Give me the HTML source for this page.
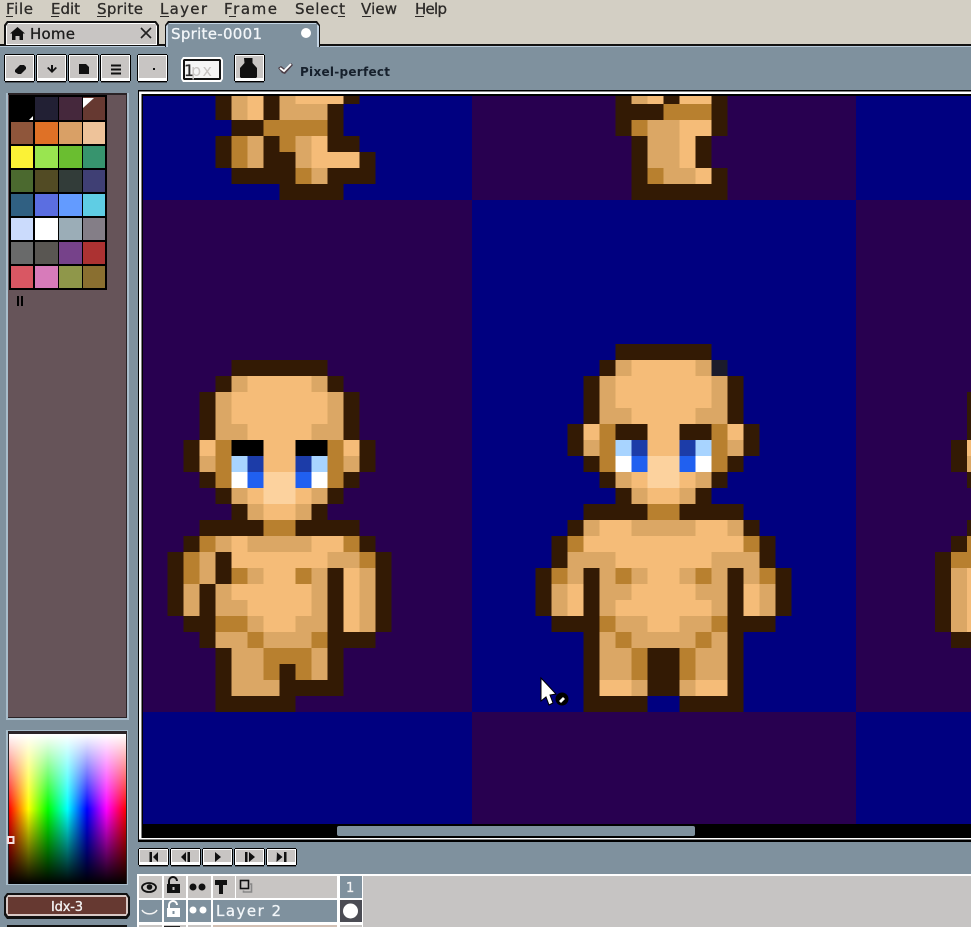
<!DOCTYPE html>
<html><head><meta charset="utf-8"><title>Aseprite</title>
<style>
html,body{margin:0;padding:0;background:#7f919e;width:971px;height:927px;overflow:hidden}
svg{display:block}
#root{filter:blur(.35px)}
text{font-family:"DejaVu Sans","Liberation Sans",sans-serif;font-size:15px;stroke-width:.3px}
.m{fill:#2c2a28;stroke:#2c2a28}
</style></head><body>
<svg id="root" width="971" height="927" viewBox="0 0 971 927" xmlns="http://www.w3.org/2000/svg">
<defs>
<linearGradient id="hue" x1="0" x2="1" y1="0" y2="0">
<stop offset="0" stop-color="#f00"/><stop offset=".1667" stop-color="#ff0"/><stop offset=".3333" stop-color="#0f0"/><stop offset=".5" stop-color="#0ff"/><stop offset=".6667" stop-color="#00f"/><stop offset=".8333" stop-color="#f0f"/><stop offset="1" stop-color="#f00"/>
</linearGradient>
<linearGradient id="wb" x1="0" x2="0" y1="0" y2="1">
<stop offset="0" stop-color="#fff"/><stop offset=".5" stop-color="#fff" stop-opacity="0"/><stop offset=".5" stop-color="#000" stop-opacity="0"/><stop offset="1" stop-color="#000"/>
</linearGradient>
<g id="b">
<rect x="0" y="1" width="31" height="26" fill="#000"/><rect x="1" y="0" width="29" height="28" fill="#000"/>
<rect x="1" y="1" width="29" height="26" fill="#fff"/><rect x="2" y="2" width="27" height="22" fill="#c8c5c3"/>
<rect x="1" y="28" width="29" height="1" fill="#4f5860"/>
</g>
<g id="p">
<rect x="0" y="1" width="31" height="16" fill="#000"/><rect x="1" y="0" width="29" height="18" fill="#000"/>
<rect x="1" y="1" width="29" height="16" fill="#fff"/><rect x="2" y="2" width="27" height="12" fill="#c8c5c3"/>
<rect x="1" y="18" width="29" height="1" fill="#4f5860"/>
</g>
</defs>

<!-- menu + tab bar -->
<rect width="971" height="46" fill="#d3cfc4"/>
<text class="m" x="6" y="14" textLength="27">File</text>
<text class="m" x="51" y="14" textLength="29">Edit</text>
<text class="m" x="97" y="14" textLength="46">Sprite</text>
<text class="m" x="160" y="14" textLength="47">Layer</text>
<text class="m" x="224" y="14" textLength="53">Frame</text>
<text class="m" x="295" y="14" textLength="50">Select</text>
<text class="m" x="361" y="14" textLength="36">View</text>
<text class="m" x="415" y="14" textLength="32">Help</text>
<g fill="#2c2a28" shape-rendering="crispEdges">
<rect x="6" y="16" width="7" height="1"/><rect x="51" y="16" width="8" height="1"/><rect x="97" y="16" width="9" height="1"/><rect x="160" y="16" width="9" height="1"/><rect x="229" y="16" width="7" height="1"/><rect x="338" y="16" width="7" height="1"/><rect x="362" y="16" width="9" height="1"/><rect x="415" y="16" width="9" height="1"/>
</g>

<!-- bar below tabs -->
<rect y="44" width="971" height="2" fill="#111"/>
<rect y="46" width="971" height="1" fill="#b9cbdb"/>
<rect y="47" width="971" height="828" fill="#7f919e"/>

<!-- Home tab -->
<path d="M4 45V25l3-4h149l3 4v20z" fill="#111"/>
<path d="M6 45V26l2-3h147l2 3v19z" fill="#fff"/>
<rect x="7" y="24" width="149" height="20" fill="#c8c5c3"/>
<path d="M17.500 27l7.500 6.500h-2V40h-3.500v-4h-4v4H12v-6.500h-2z" fill="#111"/>
<text x="30" y="39" textLength="45" fill="#1c1c1c" stroke="#1c1c1c">Home</text>
<path d="M141 28l10 10M151 28l-10 10" stroke="#222" stroke-width="1.600" fill="none"/>

<!-- Sprite tab -->
<path d="M165 47V25l3-4h149l3 4v22z" fill="#111"/>
<path d="M166 47V26l3-3h147l3 3v21z" fill="#c3d4e3"/>
<rect x="168" y="24" width="149" height="24" fill="#7f919e"/>
<text x="171" y="39" textLength="91" fill="#f2f6f9" stroke="#f2f6f9">Sprite-0001</text>
<circle cx="306" cy="33" r="5" fill="#fff"/>

<!-- toolbar -->
<use href="#b" x="4" y="54"/><use href="#b" x="36" y="54"/><use href="#b" x="68" y="54"/><use href="#b" x="100" y="54"/>
<use href="#b" x="137" y="54"/>
<g fill="#111">
<path d="M15 70l5-5h4l2 2v2l-5 5h-3l-3-2z"/>
<path d="M51 65h2v7h-2z"/><path d="M47 68l5 5 5-5-1.500-1-3.500 3.500-3.500-3.500z"/>
<path d="M79 64h7l3 3v7H79z"/>
<path d="M111 64.500h10v2h-10zM111 68.500h10v2h-10zM111 72.500h10v2h-10z"/>
<rect x="153" y="68" width="2" height="2"/>
</g>
<path d="M181 60l2-3h38l2 3v19l-2 3h-38l-2-3z" fill="#fff"/>
<path d="M183 60l1-1h36l1 1v19l-1 1h-36l-1-1z" fill="#111"/>
<path d="M185 61h34v17h-34z" fill="#f5f5f5"/>
<text x="184" y="76" style="font-size:16px" fill="#2a2a2a" stroke="#2a2a2a">1</text>
<text x="191" y="76" textLength="21" style="font-size:16px" fill="#c8c5c3">px</text>
<use href="#b" x="234" y="54"/>
<path d="M244 58h8.500v5l4.500 5v9l-1 1h-15l-1-1v-9l4.500-5z" fill="#111"/>
<path d="M278 68l3-2 4 3 6-6 2 2-8 9-3-1z" fill="#4d3f48"/>
<path d="M280 68l4 3 7-7" stroke="#fff" stroke-width="1.800" fill="none"/>
<text x="300" y="76" textLength="90" style="font-size:12px;font-weight:bold" fill="#16202c">Pixel-perfect</text>

<!-- left panel -->
<rect x="6" y="93" width="123" height="627" fill="#a8bdcb"/>
<rect x="8" y="93" width="119" height="625" fill="#2a2326"/>
<rect x="8" y="95" width="118" height="622" fill="#665459"/>
<rect x="9" y="95" width="98" height="195" fill="#000"/>
<g shape-rendering="crispEdges">
<rect x="11" y="97" width="22" height="23" fill="#000"/><rect x="35" y="97" width="23" height="23" fill="#222034"/><rect x="59" y="97" width="23" height="23" fill="#45283c"/><rect x="83" y="97" width="22" height="23" fill="#663931"/>
<rect x="11" y="122" width="22" height="22" fill="#8f563b"/><rect x="35" y="122" width="23" height="22" fill="#df7126"/><rect x="59" y="122" width="23" height="22" fill="#d9a066"/><rect x="83" y="122" width="22" height="22" fill="#eec39a"/>
<rect x="11" y="146" width="22" height="22" fill="#fbf236"/><rect x="35" y="146" width="23" height="22" fill="#99e550"/><rect x="59" y="146" width="23" height="22" fill="#6abe30"/><rect x="83" y="146" width="22" height="22" fill="#37946e"/>
<rect x="11" y="170" width="22" height="22" fill="#4b692f"/><rect x="35" y="170" width="23" height="22" fill="#524b24"/><rect x="59" y="170" width="23" height="22" fill="#323c39"/><rect x="83" y="170" width="22" height="22" fill="#3f3f74"/>
<rect x="11" y="194" width="22" height="22" fill="#306082"/><rect x="35" y="194" width="23" height="22" fill="#5b6ee1"/><rect x="59" y="194" width="23" height="22" fill="#639bff"/><rect x="83" y="194" width="22" height="22" fill="#5fcde4"/>
<rect x="11" y="218" width="22" height="22" fill="#cbdbfc"/><rect x="35" y="218" width="23" height="22" fill="#ffffff"/><rect x="59" y="218" width="23" height="22" fill="#9badb7"/><rect x="83" y="218" width="22" height="22" fill="#847e87"/>
<rect x="11" y="242" width="22" height="22" fill="#696a6a"/><rect x="35" y="242" width="23" height="22" fill="#595652"/><rect x="59" y="242" width="23" height="22" fill="#76428a"/><rect x="83" y="242" width="22" height="22" fill="#ac3232"/>
<rect x="11" y="266" width="22" height="22" fill="#d95763"/><rect x="35" y="266" width="23" height="22" fill="#d77bba"/><rect x="59" y="266" width="23" height="22" fill="#8f974a"/><rect x="83" y="266" width="22" height="22" fill="#8a6f30"/>
<rect x="17" y="296" width="2" height="10" fill="#000"/><rect x="21" y="296" width="2" height="10" fill="#000"/>
</g>
<path d="M83 98h11l-11 10z" fill="#fff"/>
<path d="M33 116v4h-4z" fill="#fff"/>

<!-- color selector -->
<rect x="6" y="730" width="122" height="155" fill="#a8bdcb"/>
<rect x="8" y="731" width="119" height="153" fill="#2a2326"/>
<rect x="9" y="734" width="117" height="150" fill="url(#hue)"/>
<rect x="9" y="734" width="117" height="150" fill="url(#wb)"/>
<rect x="8" y="837" width="5.500" height="6" fill="none" stroke="#f4e0e0" stroke-width="2"/>

<!-- Idx button -->
<path d="M4 897l3-4h120l3 4v18l-3 4H7l-3-4z" fill="#111"/>
<path d="M6 898l2-3h118l2 3v15l-2 3H8l-2-3z" fill="#d8c8c4"/>
<rect x="8" y="897" width="118" height="17" fill="#663931"/>
<text x="51" y="911" textLength="32" style="font-size:13px" fill="#f4f4f4" stroke="#f4f4f4">Idx-3</text>
<rect x="7" y="925" width="120" height="2" fill="#111"/>

<!-- canvas frame -->
<rect x="138" y="90" width="833" height="752" fill="#000"/>
<rect x="139" y="91.500" width="832" height="748" fill="#fff"/>
<rect x="141.500" y="94" width="830" height="744" fill="#000"/>

<!-- checker -->
<svg x="143" y="96" width="828" height="728" viewBox="143 96 828 728">
<g shape-rendering="crispEdges">
<rect x="143" y="96" width="828" height="728" fill="#000080"/>
<rect x="472" y="96" width="384" height="104" fill="#280050"/>
<rect x="143" y="200" width="329" height="512" fill="#280050"/>
<rect x="856" y="200" width="115" height="512" fill="#280050"/>
<rect x="472" y="712" width="384" height="112" fill="#280050"/>

<!-- top partial sprite 1 -->
<g transform="translate(215.300,88) scale(16)">
<path fill="#331a04" d="M0 0h1v2h-1zM3 0h1v2h-1zM8 0h1v1h-1zM7 1h1v2h-1zM1 2h2v1h-2zM0 3h1v2h-1zM3 3h1v2h-1zM7 3h2v1h-2zM4 4h1v1h-1zM9 4h1v2h-1zM1 5h4v1h-4zM7 5h2v1h-2zM4 6h4v1h-4z"/>
<path fill="#dba765" d="M1 0h1v2h-1zM4 0h1v1h-1zM4 1h3v1h-3zM2 3h1v2h-1zM5 3h1v2h-1zM6 5h1v1h-1z"/>
<path fill="#f5bc78" d="M2 0h1v2h-1zM5 0h3v1h-3zM6 3h1v1h-1zM6 4h3v1h-3z"/>
<path fill="#b8802f" d="M3 2h4v1h-4zM1 3h1v2h-1zM4 3h1v1h-1zM5 5h1v1h-1z"/>
</g>
<!-- top partial sprite 2 -->
<g transform="translate(615.300,88) scale(16)">
<path fill="#331a04" d="M0 0h1v3h-1zM3 0h1v1h-1zM6 0h1v3h-1zM1 1h2v1h-2zM1 3h1v3h-1zM5 3h1v2h-1zM6 5h1v1h-1zM1 6h6v1h-6z"/>
<path fill="#dba765" d="M1 0h1v1h-1zM2 2h2v1h-2zM2 3h2v2h-2zM3 5h2v1h-2z"/>
<path fill="#f5bc78" d="M2 0h1v1h-1zM4 0h2v1h-2zM4 2h2v1h-2zM4 3h1v2h-1zM5 5h1v1h-1z"/>
<path fill="#b8802f" d="M3 1h3v1h-3zM1 2h1v1h-1zM2 5h1v1h-1z"/>
</g>

<!-- sprite 1 -->
<g transform="translate(167.300,360) scale(16)">
<path fill="#331a04" d="M4 0h6v1h-6zM3 1h1v1h-1zM10 1h1v1h-1zM2 2h1v3h-1zM11 2h1v3h-1zM1 5h1v2h-1zM12 5h1v2h-1zM2 7h1v1h-1zM11 7h1v1h-1zM3 8h1v1h-1zM10 8h1v1h-1zM4 9h1v1h-1zM9 9h1v1h-1zM2 10h4v1h-4zM8 10h4v1h-4zM1 11h1v1h-1zM12 11h1v1h-1zM0 12h1v4h-1zM3 12h1v2h-1zM2 14h1v2h-1zM13 12h1v5h-1zM10 13h1v4h-1zM1 16h2v1h-2zM2 17h1v1h-1zM10 17h3v1h-3zM3 18h1v3h-1zM10 18h1v2h-1zM7 19h1v1h-1zM7 20h4v1h-4zM3 21h5v1h-5z"/>
<path fill="#dba765" d="M4 1h1v1h-1zM9 1h1v1h-1zM3 2h1v3h-1zM10 2h1v3h-1zM4 4h1v1h-1zM9 4h1v1h-1zM2 6h1v1h-1zM11 6h1v1h-1zM4 8h1v1h-1zM9 8h1v1h-1zM5 9h1v1h-1zM8 9h1v1h-1zM3 11h1v1h-1zM5 11h4v1h-4zM2 12h1v2h-1zM10 12h2v1h-2zM5 13h1v1h-1zM12 13h1v4h-1zM1 14h1v2h-1zM3 14h1v2h-1zM9 13h1v3h-1zM4 15h1v1h-1zM5 16h1v1h-1zM8 16h2v1h-2zM3 17h2v1h-2zM6 17h3v1h-3zM4 18h2v3h-2zM9 18h1v2h-1zM6 20h1v1h-1z"/>
<path fill="#f5bc78" d="M5 1h4v1h-4zM4 2h6v2h-6zM5 4h4v1h-4zM2 5h1v1h-1zM6 5h2v2h-2zM11 5h1v1h-1zM5 8h1v1h-1zM8 8h1v1h-1zM6 9h2v1h-2zM4 11h1v1h-1zM9 11h2v1h-2zM4 12h6v1h-6zM6 13h2v1h-2zM11 13h1v4h-1zM4 14h5v1h-5zM5 15h4v1h-4zM6 16h2v1h-2z"/>
<path fill="#b8802f" d="M3 5h1v3h-1zM10 5h1v3h-1zM6 10h2v1h-2zM2 11h1v1h-1zM11 11h1v1h-1zM1 12h1v2h-1zM12 12h1v1h-1zM4 13h1v1h-1zM8 13h1v1h-1zM3 16h2v1h-2zM5 17h1v1h-1zM9 17h1v1h-1zM6 18h3v1h-3zM6 19h1v1h-1zM8 19h1v1h-1z"/>
<path fill="#000" d="M4 5h2v1h-2zM8 5h2v1h-2z"/>
<path fill="#a8d4ff" d="M4 6h1v1h-1zM9 6h1v1h-1z"/>
<path fill="#1c3ca8" d="M5 6h1v1h-1zM8 6h1v1h-1z"/>
<path fill="#fff" d="M4 7h1v1h-1zM9 7h1v1h-1z"/>
<path fill="#2060f0" d="M5 7h1v1h-1zM8 7h1v1h-1z"/>
<path fill="#fcd29e" d="M6 7h2v2h-2z"/>
</g>

<!-- sprite 2 -->
<g transform="translate(535.300,344) scale(16)">
<path fill="#331a04" d="M5 0h6v1h-6zM4 1h1v1h-1zM3 2h1v3h-1zM12 2h1v3h-1zM2 5h1v2h-1zM13 5h1v2h-1zM5 5h2v1h-2zM9 5h2v1h-2zM3 7h1v1h-1zM12 7h1v1h-1zM4 8h1v1h-1zM11 8h1v1h-1zM5 9h1v1h-1zM10 9h1v1h-1zM3 10h4v1h-4zM9 10h4v1h-4zM2 11h1v1h-1zM13 11h1v1h-1zM1 12h1v2h-1zM14 12h1v2h-1zM0 14h1v3h-1zM15 14h1v3h-1zM3 14h1v9h-1zM12 14h1v9h-1zM1 17h2v1h-2zM13 17h2v1h-2zM7 19h2v3h-2zM4 22h3v1h-3zM9 22h3v1h-3z"/>
<path fill="#dba765" d="M5 1h1v1h-1zM10 1h1v1h-1zM4 2h1v3h-1zM11 2h1v3h-1zM5 4h1v1h-1zM10 4h1v1h-1zM3 6h1v1h-1zM12 6h1v1h-1zM5 8h1v1h-1zM10 8h1v1h-1zM6 9h1v1h-1zM9 9h1v1h-1zM3 11h1v1h-1zM6 11h4v1h-4zM12 11h1v1h-1zM2 13h3v1h-3zM11 13h3v1h-3zM2 14h1v1h-1zM4 14h1v1h-1zM6 14h1v1h-1zM9 14h1v1h-1zM11 14h1v1h-1zM13 14h1v1h-1zM1 15h1v2h-1zM4 15h2v1h-2zM10 15h2v1h-2zM14 15h1v2h-1zM4 16h1v1h-1zM11 16h1v1h-1zM5 17h2v1h-2zM9 17h2v1h-2zM4 18h1v1h-1zM6 18h4v1h-4zM11 18h1v1h-1zM4 19h2v2h-2zM10 19h2v2h-2zM6 21h1v1h-1zM9 21h1v1h-1z"/>
<path fill="#f5bc78" d="M6 1h4v1h-4zM5 2h6v2h-6zM6 4h4v1h-4zM3 5h1v1h-1zM12 5h1v1h-1zM7 5h2v2h-2zM6 8h1v1h-1zM9 8h1v1h-1zM7 9h2v1h-2zM4 11h2v1h-2zM10 11h2v1h-2zM3 12h10v1h-10zM5 13h6v1h-6zM7 14h2v1h-2zM2 15h1v2h-1zM6 15h4v1h-4zM13 15h1v2h-1zM5 16h6v1h-6zM7 17h2v1h-2zM4 21h2v1h-2zM10 21h2v1h-2z"/>
<path fill="#b8802f" d="M4 5h1v3h-1zM11 5h1v3h-1zM7 10h2v1h-2zM2 12h1v1h-1zM13 12h1v1h-1zM1 14h1v1h-1zM5 14h1v1h-1zM10 14h1v1h-1zM14 14h1v1h-1zM4 17h1v1h-1zM11 17h1v1h-1zM5 18h1v1h-1zM10 18h1v1h-1zM6 19h1v2h-1zM9 19h1v2h-1z"/>
<path fill="#a8d4ff" d="M5 6h1v1h-1zM10 6h1v1h-1z"/>
<path fill="#1c3ca8" d="M6 6h1v1h-1zM9 6h1v1h-1z"/>
<path fill="#fff" d="M5 7h1v1h-1zM10 7h1v1h-1z"/>
<path fill="#2060f0" d="M6 7h1v1h-1zM9 7h1v1h-1z"/>
<path fill="#fcd29e" d="M7 7h2v2h-2z"/>
<path fill="#1b1b2b" d="M11 1h1v1h-1z"/>
</g>

<!-- partial sprite 3 -->
<g>
<rect x="935" y="552" width="16" height="80" fill="#331a04"/>
<rect x="951" y="440" width="16" height="32" fill="#331a04"/>
<rect x="951" y="536" width="16" height="16" fill="#331a04"/>
<rect x="951" y="552" width="16" height="16" fill="#b8802f"/>
<rect x="951" y="568" width="16" height="64" fill="#dba765"/>
<rect x="951" y="632" width="20" height="16" fill="#331a04"/>
<rect x="967" y="392" width="4" height="48" fill="#331a04"/>
<rect x="967" y="440" width="4" height="16" fill="#f5bc78"/>
<rect x="967" y="456" width="4" height="16" fill="#dba765"/>
<rect x="967" y="472" width="4" height="16" fill="#331a04"/>
<rect x="967" y="520" width="4" height="16" fill="#331a04"/>
<rect x="967" y="536" width="4" height="32" fill="#b8802f"/>
<rect x="967" y="568" width="4" height="64" fill="#f5bc78"/>
</g>
</g>

<!-- mouse cursor -->
<path d="M541 678l15 16-6 1 3 8-4 2-3-8-5 4z" fill="#fff" stroke="#000" stroke-width="1"/>
<circle cx="562" cy="699" r="6.500" fill="#000"/>
<path d="M559 701l4-4 2 2-4 4z" fill="#fff"/>
</svg>

<!-- horizontal scroll -->
<rect x="337" y="826" width="358" height="10" rx="2" fill="#7f919e"/>

<!-- playback buttons -->
<use href="#p" x="138" y="848"/><use href="#p" x="170" y="848"/><use href="#p" x="202" y="848"/><use href="#p" x="234" y="848"/><use href="#p" x="266" y="848"/>
<g fill="#111">
<path d="M149.500 852h2.500v10h-2.500zM153 857l5-5v10z"/>
<path d="M181 857l5-5v10zM187.500 852h2.500v10h-2.500z"/>
<path d="M215 852l6 5-6 5z"/>
<path d="M245 852h2.500v10H245zM249 852l6 5-6 5z"/>
<path d="M277 852h-0.500l6 5-6 5zM284 852h2.500v10H284z"/>
</g>

<!-- timeline -->
<rect x="362" y="874" width="609" height="53" fill="#c6c4c3"/>
<rect x="137" y="874" width="834" height="2" fill="#fff"/>
<rect x="137" y="876" width="226" height="51" fill="#fff"/>
<g shape-rendering="crispEdges">
<rect x="139" y="876" width="23" height="22" fill="#c8c5c3"/>
<rect x="164" y="876" width="22" height="22" fill="#c8c5c3"/>
<rect x="188" y="876" width="23" height="22" fill="#c8c5c3"/>
<rect x="213" y="876" width="22" height="22" fill="#c8c5c3"/>
<rect x="236" y="876" width="101" height="22" fill="#c8c5c3"/>
<rect x="340" y="876" width="22" height="22" fill="#7f919e"/>
<rect x="139" y="900" width="23" height="22" fill="#7f919e"/>
<rect x="164" y="900" width="22" height="22" fill="#7f919e"/>
<rect x="188" y="900" width="23" height="22" fill="#7f919e"/>
<rect x="213" y="900" width="124" height="22" fill="#7f919e"/>
<rect x="340" y="900" width="22" height="22" fill="#4b4c54"/>
<rect x="139" y="925" width="23" height="2" fill="#c8c5c3"/>
<rect x="164" y="925" width="22" height="2" fill="#c8c5c3"/>
<rect x="188" y="925" width="23" height="2" fill="#c8c5c3"/>
<rect x="213" y="925" width="124" height="2" fill="#d2c0b4"/>
<rect x="340" y="925" width="22" height="2" fill="#c8c5c3"/>
<rect x="164" y="926" width="16" height="1" fill="#222"/>
</g>
<!-- header icons -->
<ellipse cx="149" cy="887.500" rx="7" ry="4.500" fill="none" stroke="#111" stroke-width="1.800"/>
<circle cx="149.500" cy="887" r="2.800" fill="#111"/>
<path d="M169 884v-3a4 4 0 0 1 8 0" fill="none" stroke="#111" stroke-width="2"/>
<rect x="167" y="884" width="13" height="9" fill="#111"/>
<rect x="172.500" y="887" width="2" height="3" fill="#c8c5c3"/>
<circle cx="193" cy="887" r="3.500" fill="#111"/><circle cx="202" cy="887" r="3.500" fill="#111"/>
<path d="M215 880h12v5h-4v9h-4v-9h-4z" fill="#111"/>
<rect x="240.500" y="880.500" width="8" height="8" fill="none" stroke="#111" stroke-width="1.600"/>
<path d="M250 884h1.500v8h-8v-1.500" fill="none" stroke="#888" stroke-width="1.600"/>
<text x="346" y="892" style="font-size:13px" fill="#f4f4f4" stroke="#f4f4f4">1</text>
<!-- layer row -->
<path d="M142 910a8 6 0 0 0 15 0" fill="none" stroke="#f4f4f4" stroke-width="1.500"/>
<path d="M169 908v-3a4 4 0 0 1 8 0" fill="none" stroke="#fff" stroke-width="2"/>
<rect x="167" y="908" width="13" height="9" fill="#fff"/>
<rect x="172.500" y="911" width="2" height="3" fill="#7f919e"/>
<circle cx="193" cy="910" r="3.500" fill="#fff"/><circle cx="203" cy="910" r="3.500" fill="#fff"/>
<text x="216" y="916" textLength="65" fill="#f2f6f9" stroke="#f2f6f9">Layer 2</text>
<circle cx="350.500" cy="911" r="7.500" fill="#fff"/>
</svg>
</body></html>
